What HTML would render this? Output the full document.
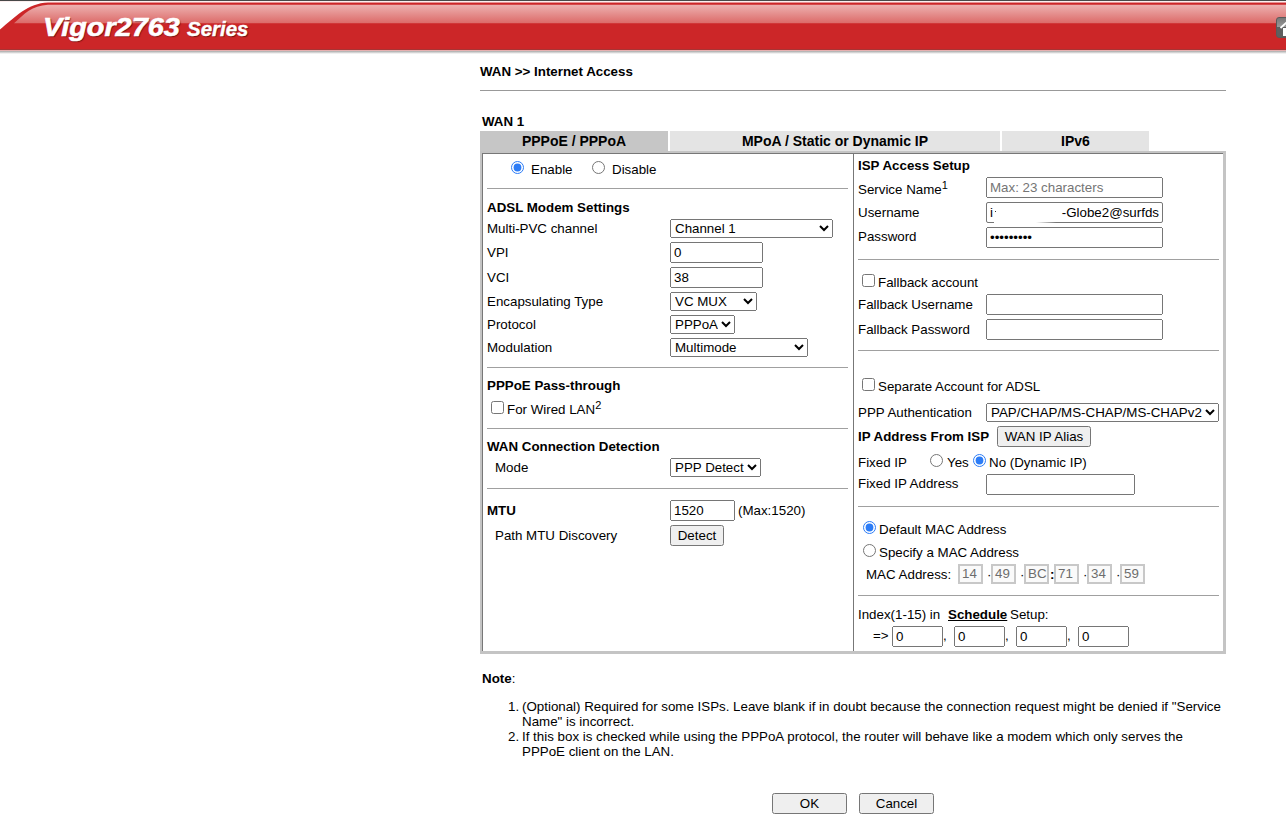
<!DOCTYPE html>
<html><head><meta charset="utf-8">
<style>
html,body{margin:0;padding:0;background:#fff;width:1286px;height:837px;overflow:hidden;position:relative}
body{font-family:"Liberation Sans",sans-serif;font-size:13.333px;color:#000}
.a{position:absolute;white-space:nowrap;line-height:15px}
.b{font-weight:bold}
.hr{position:absolute;height:1px;background:#a0a0a0}
.inp{position:absolute;box-sizing:border-box;border:1px solid #767676;border-radius:2px;background:#fff;font-family:"Liberation Sans",sans-serif;font-size:13.333px;line-height:15px;padding:0 0 0 3px;overflow:hidden;white-space:nowrap}
.sel{position:absolute;box-sizing:border-box;border:1px solid #767676;border-radius:2px;background:#fff;font-size:13.333px;line-height:15px;padding:0 0 0 4px;white-space:nowrap}
.sel svg{position:absolute;top:5px;right:4px}
.btn{position:absolute;box-sizing:border-box;border:1px solid #767676;border-radius:2px;background:#efefef;font-size:13.333px;line-height:15px;text-align:center;white-space:nowrap}
.rad{position:absolute;width:13px;height:13px}
.chk{position:absolute;box-sizing:border-box;width:13px;height:13px;border:1px solid #767676;border-radius:2px;background:#fff}
.mac{position:absolute;box-sizing:border-box;width:25px;height:20px;border:2px solid #c8c8c8;background:#fafafa;color:#6d6d6d;line-height:15px;padding:0 0 0 2px}

input,select,button{position:absolute;margin:0;box-sizing:border-box;font-family:"Liberation Sans",sans-serif;font-size:13.333px;color:#000}
input[type=text],input[type=password]{height:21px}
select{height:19px}
button{height:21px;padding:0}
input[type=radio],input[type=checkbox]{width:13px;height:13px;accent-color:#2c7cf6}
input::placeholder{color:#757575}
sup{font-size:11px;line-height:0;vertical-align:super}
</style></head><body>

<!-- header -->
<div id="hdr" style="position:absolute;left:0;top:0;width:1286px;height:56px;overflow:hidden">
  <div style="position:absolute;left:0;top:0;width:1286px;height:1px;background:#484848"></div>
  <div style="position:absolute;left:0;top:1px;width:1286px;height:1px;background:#fbeeee"></div>
  <svg width="1286" height="56" style="position:absolute;left:0;top:0">
    <defs>
      <linearGradient id="hl" x1="0" y1="0" x2="0" y2="1">
        <stop offset="0" stop-color="#edb2b1"/>
        <stop offset="1" stop-color="#dc6a68"/>
      </linearGradient>
      <linearGradient id="sh" x1="0" y1="0" x2="0" y2="1">
        <stop offset="0" stop-color="#a8a8a8"/>
        <stop offset="1" stop-color="#ffffff"/>
      </linearGradient>
    </defs>
    <rect x="0" y="51" width="1286" height="3" fill="url(#sh)"/>
    <path d="M0 29.5 C15 17 28 3 48 2.4 L1286 2.4 L1286 50 L0 50 Z" fill="#cc2628"/>
    <rect x="0" y="49" width="1286" height="1" fill="#a83434"/>
    <rect x="0" y="50" width="1286" height="1" fill="#e7b0b0"/>
    <path d="M14 23.3 C24 14 32 5.5 48 4.7 L1286 4.7 L1286 23.3 Z" fill="url(#hl)"/>
  </svg>
  <div style="position:absolute;left:1276px;top:17px;width:14px;height:21px;box-sizing:border-box;border:1px solid #5a5a5a;border-radius:3px;background:linear-gradient(#777 0,#9a9a9a 48%,#5f5f5f 48%,#5f5f5f 100%)"></div>
  <svg width="12" height="16" style="position:absolute;left:1279px;top:20px"><path d="M1.5 8 L8 2 L12 5" stroke="#fff" stroke-width="1.8" fill="none"/><rect x="4" y="8" width="8" height="8" fill="#fff"/></svg>
  <div id="lg1" style="position:absolute;left:43px;top:12px;font-weight:bold;font-style:italic;font-size:25px;line-height:30px;color:#fff;-webkit-text-stroke:0.6px #fff;text-shadow:1px 1px 1px rgba(90,10,10,.8);transform:scaleX(1.153);transform-origin:0 0;letter-spacing:0px">Vigor2763</div>
  <div id="lg2" style="position:absolute;left:187px;top:17px;font-weight:bold;font-style:italic;font-size:19.5px;line-height:24px;color:#fff;-webkit-text-stroke:0.4px #fff;text-shadow:1px 1px 1px rgba(90,10,10,.8);transform:scaleX(1.05);transform-origin:0 0">Series</div>
</div>

<!-- title -->
<div class="a b" style="left:480px;top:64px">WAN &gt;&gt; Internet Access</div>
<div class="hr" style="left:480px;top:90px;width:746px;background:#999"></div>
<div class="a b" style="left:482px;top:114px">WAN 1</div>

<!-- tabs -->
<div style="position:absolute;left:480px;top:131px;width:188px;height:20px;background:#c6c6c6"></div>
<div style="position:absolute;left:670px;top:131px;width:330px;height:20px;background:#e4e4e4"></div>
<div style="position:absolute;left:1002px;top:131px;width:147px;height:20px;background:#e4e4e4"></div>
<div class="a b" style="left:480px;width:188px;text-align:center;top:134px;font-size:14px">PPPoE / PPPoA</div>
<div class="a b" style="left:670px;width:330px;text-align:center;top:134px;font-size:14px">MPoA / Static or Dynamic IP</div>
<div class="a b" style="left:1002px;width:147px;text-align:center;top:134px;font-size:14px">IPv6</div>

<!-- box -->
<div style="position:absolute;left:480px;top:151px;width:746px;height:503px;box-sizing:border-box;border:2px solid #c4c4c4;border-right-width:3px;border-bottom-width:3px"></div>
<div style="position:absolute;left:482px;top:153px;width:741px;height:1px;background:#777"></div>
<div style="position:absolute;left:482px;top:153px;width:1px;height:498px;background:#777"></div>
<div style="position:absolute;left:853px;top:153px;width:1px;height:498px;background:#777"></div>


<input type="radio" checked style="left:511px;top:161px">
<div class="a" style="left:531px;top:162px">Enable</div>
<input type="radio" style="left:592px;top:161px">
<div class="a" style="left:612px;top:162px">Disable</div>
<div class="hr" style="left:487px;top:188px;width:361px"></div>
<div class="a b" style="left:487px;top:200px">ADSL Modem Settings</div>
<div class="a" style="left:487px;top:221px">Multi-PVC channel</div>
<select style="left:670px;top:219px;width:163px"><option>Channel 1</option></select>
<div class="a" style="left:487px;top:245px">VPI</div>
<input type="text" value="0" style="left:670px;top:242px;width:93px">
<div class="a" style="left:487px;top:270px">VCI</div>
<input type="text" value="38" style="left:670px;top:267px;width:93px">
<div class="a" style="left:487px;top:294px">Encapsulating Type</div>
<select style="left:670px;top:292px;width:87px"><option>VC MUX</option></select>
<div class="a" style="left:487px;top:317px">Protocol</div>
<select style="left:670px;top:315px;width:65px"><option>PPPoA</option></select>
<div class="a" style="left:487px;top:340px">Modulation</div>
<select style="left:670px;top:338px;width:138px"><option>Multimode</option></select>
<div class="hr" style="left:487px;top:367px;width:361px"></div>
<div class="a b" style="left:487px;top:378px">PPPoE Pass-through</div>
<input type="checkbox" style="left:491px;top:401px">
<div class="a" style="left:507px;top:402px">For Wired LAN<sup>2</sup></div>
<div class="hr" style="left:487px;top:428px;width:361px"></div>
<div class="a b" style="left:487px;top:439px">WAN Connection Detection</div>
<div class="a" style="left:495px;top:460px">Mode</div>
<select style="left:670px;top:458px;width:91px"><option>PPP Detect</option></select>
<div class="hr" style="left:487px;top:488px;width:361px"></div>
<div class="a b" style="left:487px;top:503px">MTU</div>
<input type="text" value="1520" style="left:670px;top:500px;width:65px">
<div class="a" style="left:738px;top:503px">(Max:1520)</div>
<div class="a" style="left:495px;top:528px">Path MTU Discovery</div>
<button style="left:670px;top:525px;width:54px">Detect</button>


<div class="a b" style="left:858px;top:158px">ISP Access Setup</div>
<div class="a" style="left:858px;top:182px">Service Name<sup>1</sup></div>
<input type="text" placeholder="Max: 23 characters" style="left:986px;top:177px;width:177px">
<div class="a" style="left:858px;top:205px">Username</div>
<div class="inp" style="left:986px;top:202px;width:177px;height:21px;padding:0"><div class="a" style="left:3px;top:2px">i</div><div style="position:absolute;left:8px;top:8px;width:1px;height:1px;background:#333"></div><div class="a" style="right:3px;top:2px">-Globe2@surfds</div></div>
<div style="position:absolute;left:994px;top:222px;width:42px;height:1px;background:#fff"></div>
<div style="position:absolute;left:1036px;top:222px;width:20px;height:1px;background:linear-gradient(90deg,#fff,#767676)"></div>
<div class="a" style="left:858px;top:229px">Password</div>
<input type="password" value="123456789" style="left:986px;top:227px;width:177px">
<div class="hr" style="left:858px;top:259px;width:361px"></div>
<input type="checkbox" style="left:862px;top:274px">
<div class="a" style="left:878px;top:275px">Fallback account</div>
<div class="a" style="left:858px;top:297px">Fallback Username</div>
<input type="text" style="left:986px;top:294px;width:177px">
<div class="a" style="left:858px;top:322px">Fallback Password</div>
<input type="text" style="left:986px;top:319px;width:177px">
<div class="hr" style="left:858px;top:350px;width:361px"></div>
<input type="checkbox" style="left:862px;top:378px">
<div class="a" style="left:878px;top:379px">Separate Account for ADSL</div>
<div class="a" style="left:858px;top:405px">PPP Authentication</div>
<select style="left:986px;top:403px;width:233px"><option>PAP/CHAP/MS-CHAP/MS-CHAPv2</option></select>
<div class="a b" style="left:858px;top:429px">IP Address From ISP</div>
<button style="left:997px;top:426px;width:94px">WAN IP Alias</button>
<div class="a" style="left:858px;top:455px">Fixed IP</div>
<input type="radio" style="left:930px;top:454px">
<div class="a" style="left:947px;top:455px">Yes</div>
<input type="radio" checked style="left:973px;top:454px">
<div class="a" style="left:989px;top:455px">No (Dynamic IP)</div>
<div class="a" style="left:858px;top:476px">Fixed IP Address</div>
<input type="text" style="left:986px;top:474px;width:149px">
<div class="hr" style="left:858px;top:506px;width:361px"></div>
<input type="radio" checked style="left:863px;top:521px">
<div class="a" style="left:879px;top:522px">Default MAC Address</div>
<input type="radio" style="left:863px;top:544px">
<div class="a" style="left:879px;top:545px">Specify a MAC Address</div>
<div class="a" style="left:866px;top:567px">MAC Address:</div>
<div class="mac" style="left:958px;top:564px">14</div>
<div class="a" style="left:987px;top:567px">&middot;</div>
<div class="mac" style="left:991px;top:564px">49</div>
<div class="a" style="left:1020px;top:567px">&middot;</div>
<div class="mac" style="left:1024px;top:564px">BC</div>
<div class="a b" style="left:1050px;top:567px">:</div>
<div class="mac" style="left:1054px;top:564px">71</div>
<div class="a" style="left:1083px;top:567px">&middot;</div>
<div class="mac" style="left:1087px;top:564px">34</div>
<div class="a" style="left:1116px;top:567px">&middot;</div>
<div class="mac" style="left:1120px;top:564px">59</div>
<div class="hr" style="left:858px;top:595px;width:361px"></div>
<div class="a" style="left:858px;top:607px">Index(1-15) in</div>
<div class="a b" style="left:948px;top:607px;text-decoration:underline">Schedule</div>
<div class="a" style="left:1010px;top:607px">Setup:</div>
<div class="a" style="left:873px;top:628px">=&gt;</div>
<input type="text" value="0" style="left:892px;top:626px;width:51px">
<div class="a" style="left:943px;top:628px">,</div>
<input type="text" value="0" style="left:954px;top:626px;width:51px">
<div class="a" style="left:1005px;top:628px">,</div>
<input type="text" value="0" style="left:1016px;top:626px;width:51px">
<div class="a" style="left:1067px;top:628px">,</div>
<input type="text" value="0" style="left:1078px;top:626px;width:51px">


<div class="a" style="left:482px;top:671px"><b>Note</b>:</div>
<div class="a" style="left:508px;top:699px">1.</div>
<div class="a" style="left:522px;top:699px">(Optional) Required for some ISPs. Leave blank if in doubt because the connection request might be denied if "Service</div>
<div class="a" style="left:522px;top:714px">Name" is incorrect.</div>
<div class="a" style="left:508px;top:729px">2.</div>
<div class="a" style="left:522px;top:729px">If this box is checked while using the PPPoA protocol, the router will behave like a modem which only serves the</div>
<div class="a" style="left:522px;top:744px">PPPoE client on the LAN.</div>
<button style="left:772px;top:793px;width:75px">OK</button>
<button style="left:859px;top:793px;width:75px">Cancel</button>

</body></html>
